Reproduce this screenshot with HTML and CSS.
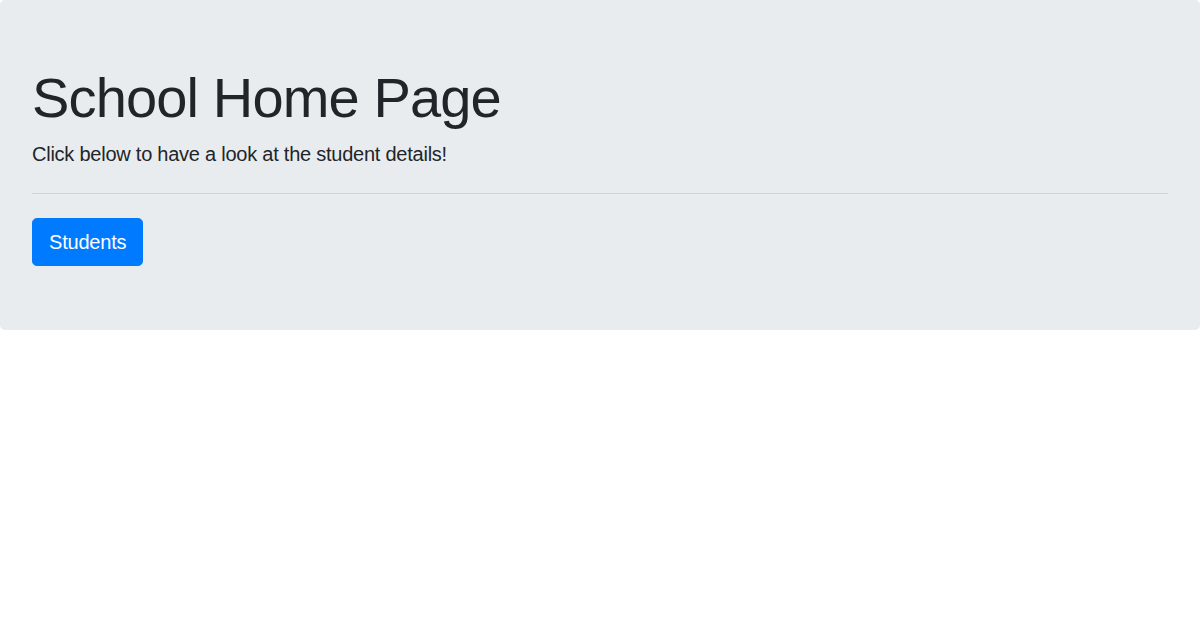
FILE: index.html
```html
<!DOCTYPE html>
<html lang="en">
<head>
<meta charset="utf-8">
<title>School Home Page</title>
<link rel="stylesheet" href="styles.css">
</head>
<body>
<div class="jumbotron">
  <h1 class="display">School Home Page</h1>
  <p class="lead">Click below to have a look at the student details!</p>
  <hr class="divider">
  <a class="btn" href="#">Students</a>
</div>
</body>
</html>
```
FILE: styles.css
```css
* { box-sizing: border-box; }
body {
  margin: 0;
  font-family: "Liberation Sans", Arial, Helvetica, sans-serif;
  font-size: 16px;
  line-height: 1.5;
  color: #212529;
  background: #fff;
}
.jumbotron {
  background: #e9ecef;
  padding: 64px 32px;
  border-radius: 4.8px;
  margin-bottom: 32px;
}
.display {
  margin: 0 0 8px;
  font-size: 56px;
  font-weight: 300;
  line-height: 1.2;
  letter-spacing: -0.85px;
}
.lead {
  margin: 0 0 16px;
  font-size: 20px;
  font-weight: 300;
  line-height: 1.5;
  letter-spacing: -0.24px;
}
.divider {
  margin: 24px 0;
  border: 0;
  border-top: 1px solid rgba(0,0,0,.1);
  height: 0;
}
.btn {
  display: inline-block;
  padding: 8px 16px;
  font-size: 20px;
  line-height: 1.5;
  border-radius: 4.8px;
  border: 1px solid #007bff;
  background: #007bff;
  color: #fff;
  text-decoration: none;
  vertical-align: middle;
  letter-spacing: -0.2px;
}
```
